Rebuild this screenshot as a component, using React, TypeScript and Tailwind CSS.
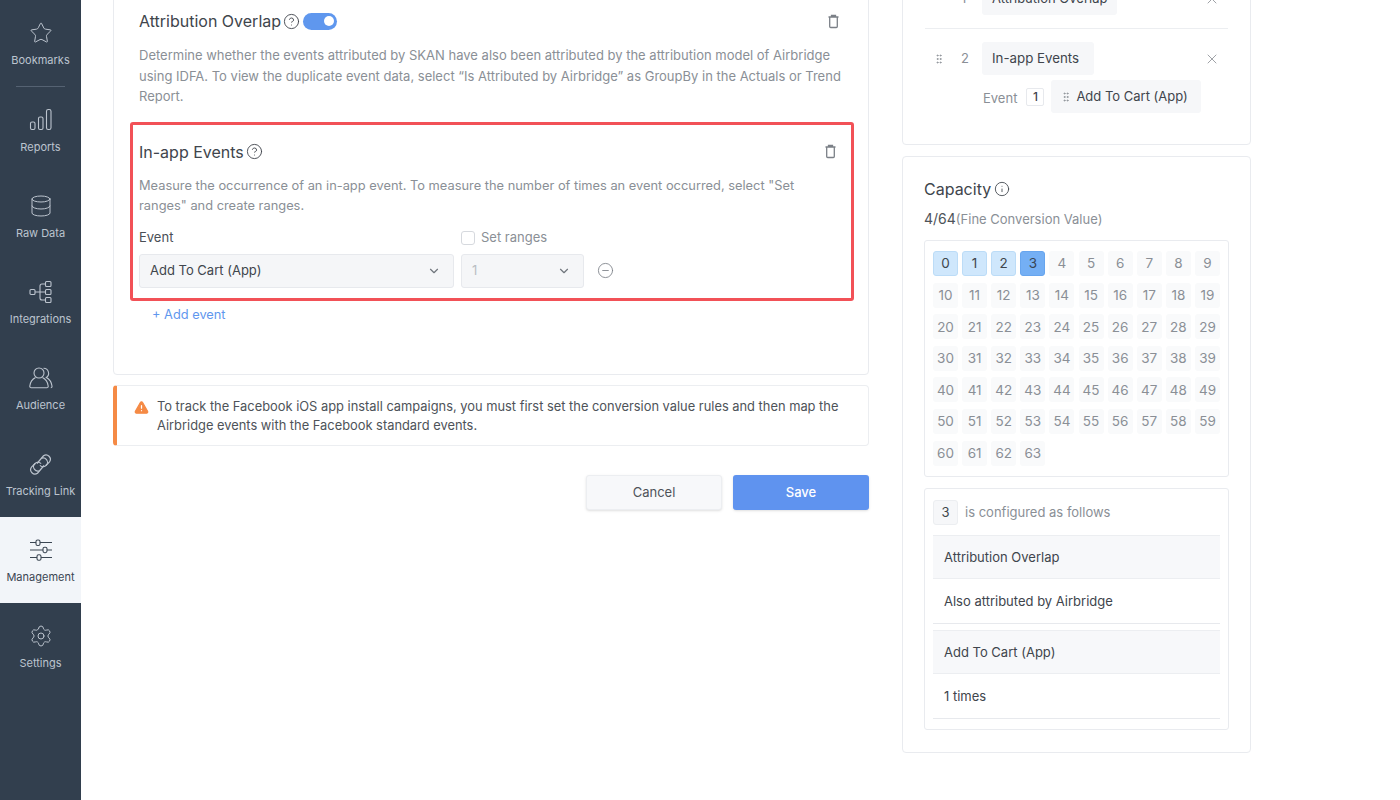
import React from "react";
import { Star, Database, Settings, CircleHelp, Info, ChevronDown, CircleMinus, X, GripVertical, TriangleAlert } from "lucide-react";

const font = { fontFamily: "Inter, 'Liberation Sans', sans-serif" };

function BarsIcon() {
  return (
    <svg width="24" height="24" viewBox="0 0 24 24" fill="none" stroke="currentColor" strokeWidth="1.1">
      <rect x="1.5" y="14" width="4.5" height="7.5" rx="1.5" />
      <rect x="9.5" y="9" width="4.5" height="12.5" rx="1.5" />
      <rect x="17.5" y="1.5" width="4.5" height="20" rx="1.8" />
    </svg>
  );
}

function TreeIcon() {
  return (
    <svg width="24" height="24" viewBox="0 0 24 24" fill="none" stroke="currentColor" strokeWidth="1.1">
      <rect x="1" y="9.5" width="5" height="5" rx="1" />
      <rect x="16.5" y="1.5" width="5.5" height="5" rx="1" />
      <rect x="16.5" y="9.5" width="5.5" height="5" rx="1" />
      <rect x="16.5" y="17.5" width="5.5" height="5" rx="1" />
      <path d="M6 12h10.5M11 12V6c0-1.5.8-2 2-2h3.5M11 12v6c0 1.5.8 2 2 2h3.5" />
    </svg>
  );
}

function PeopleIcon() {
  return (
    <svg width="24" height="22" viewBox="0 0 24 22" fill="none" stroke="currentColor" strokeWidth="1.1">
      <circle cx="10" cy="6" r="5" />
      <path d="M6.5 10.5C3.5 12 1.3 15 .8 19c-.1 1 .4 1.8 1.4 1.8h15.6c1 0 1.5-.8 1.4-1.8-.5-4-2.7-7-5.7-8.5" />
      <path d="M14.5 1.3a5 5 0 0 1 2.8 9.2c2.9 1.5 5.2 4.5 5.7 8.5.1 1-.3 1.8-1.2 1.8" />
    </svg>
  );
}

function ChainIcon() {
  return (
    <svg width="25" height="25" viewBox="0 0 25 25" fill="none" stroke="currentColor" strokeWidth="1.2">
      <path d="M9 11.5 15.5 3.8a4.3 4.3 0 0 1 6 6l-3.6 3.7a4.3 4.3 0 0 1-6-.2" />
      <path d="M16 13.5 9.5 21.2a4.3 4.3 0 0 1-6-6l3.6-3.7a4.3 4.3 0 0 1 6 .2" />
      <path d="M13.5 6.3a4.3 4.3 0 0 1 5 1.3 4.2 4.2 0 0 1-.6 5.9" />
      <path d="M11.5 18.7a4.3 4.3 0 0 1-5-1.3 4.2 4.2 0 0 1 .6-5.9" />
    </svg>
  );
}

function SlidersIcon() {
  return (
    <svg width="24" height="24" viewBox="0 0 24 24" fill="none" stroke="currentColor" strokeWidth="1.1">
      <path d="M1 4.5h6M11 4.5h12M1 12h13M18 12h5M1 19.5h7M12 19.5h11" />
      <rect x="7" y="2" width="4" height="5.5" rx="1.6" />
      <rect x="14" y="9.2" width="4" height="5.5" rx="1.6" />
      <rect x="8" y="16.8" width="4" height="5.5" rx="1.6" />
    </svg>
  );
}

function TrashIcon() {
  return (
    <svg width="15" height="15" viewBox="0 0 15 15" fill="none" stroke="#7b8087" strokeWidth="1.3" className="shrink-0">
      <path d="M2.5 3h10M5.500 3V1.500h4V3" />
      <path d="M3.700 3v9.500c0 .6.400 1 1 1h5.600c.6 0 1-.4 1-1V3" />
    </svg>
  );
}

function NavItem({ icon, label, active, first }: { icon: React.ReactNode; label: string; active?: boolean; first?: boolean }) {
  return (
    <div className={`flex h-[86px] flex-col items-center justify-start pt-[20px] ${active ? "bg-[#f2f5f9] text-[#3b4653]" : "text-[#bcc4ce]"}`}>
      <div className="flex h-[26px] items-center justify-center">{icon}</div>
      <span className={`${first ? "mt-[6px]" : "mt-[5.5px]"} text-[11px] leading-[16px] whitespace-nowrap`}>{label}</span>
    </div>
  );
}

function Sidebar() {
  return (
    <div className="flex h-[800px] w-[81px] shrink-0 flex-col bg-[#323f4e]">
      <NavItem icon={<Star size={24} strokeWidth={1} />} label="Bookmarks" first />
      <div className="mx-[16px] h-px bg-[#556272]" />
      <NavItem icon={<BarsIcon />} label="Reports" />
      <NavItem icon={<Database size={24} strokeWidth={1} />} label="Raw Data" />
      <NavItem icon={<TreeIcon />} label="Integrations" />
      <NavItem icon={<PeopleIcon />} label="Audience" />
      <NavItem icon={<ChainIcon />} label="Tracking Link" />
      <NavItem icon={<SlidersIcon />} label="Management" active />
      <NavItem icon={<Settings size={24} strokeWidth={1} />} label="Settings" />
    </div>
  );
}

function SectionTitle({ title }: { title: string }) {
  return (
    <div className="flex items-center gap-[2px] text-[16px] leading-[24px] text-[#40454c]">
      <span>{title}</span>
      <CircleHelp size={17} strokeWidth={1.3} />
    </div>
  );
}

function MainColumn() {
  return (
    <div className="ml-[32px] flex w-[756px] shrink-0 flex-col">
      <div className="-mt-[40px] h-[415px] rounded-b-[4px] border border-[#e9ebef] pt-[48px]">
        <div className="flex items-center pr-[27px] pl-[25px]">
          <SectionTitle title="Attribution Overlap" />
          <div className="ml-[3px] flex h-[17px] w-[34px] items-center justify-end rounded-full bg-[#5f97ee] pr-[3px]">
            <div className="h-[10px] w-[10px] rounded-full bg-white" />
          </div>
          <span className="ml-auto"><TrashIcon /></span>
        </div>
        <p className="mt-[12px] mr-[20px] ml-[25px] text-[13px] leading-[20.5px] text-[#8a8f96]">
          Determine whether the events attributed by SKAN have also been attributed by the attribution model of Airbridge using IDFA. To view the duplicate event data, select “Is Attributed by Airbridge” as GroupBy in the Actuals or Trend Report.
        </p>
        <div className="mt-[15px] mr-[14px] ml-[16px] h-[179px] rounded-[3px] border-[3px] border-[#f25157] pt-[15px] pr-[13px] pl-[6px]">
          <div className="flex items-center">
            <SectionTitle title="In-app Events" />
            <span className="ml-auto"><TrashIcon /></span>
          </div>
          <p className="mt-[12px] text-[12.85px] leading-[20.5px] text-[#8a8f96]">
            Measure the occurrence of an in-app event. To measure the number of times an event occurred, select "Set ranges" and create ranges.
          </p>
          <div className="mt-[11px] flex h-[20px] items-center text-[13px]">
            <span className="w-[322px] text-[#4a4f56]">Event</span>
            <span className="h-[14px] w-[14px] rounded-[3px] border border-[#d6d9de] bg-white" />
            <span className="ml-[6px] text-[#8a8f96]">Set ranges</span>
          </div>
          <div className="mt-[6px] flex items-center">
            <div className="flex h-[34px] w-[315px] items-center justify-between rounded-[3px] border border-[#e7e9ed] bg-[#f5f6f8] pr-[12px] pl-[10px] text-[13px] text-[#40454c]">
              <span>Add To Cart (App)</span>
              <ChevronDown size={14} className="text-[#70767d]" />
            </div>
            <div className="ml-[7px] flex h-[34px] w-[123px] items-center justify-between rounded-[3px] border border-[#e7e9ed] bg-[#f5f6f8] pr-[12px] pl-[10px] text-[13px] text-[#b9bdc3]">
              <span>1</span>
              <ChevronDown size={14} className="text-[#70767d]" />
            </div>
            <CircleMinus size={17} strokeWidth={1.2} className="ml-[13px] text-[#7b8087]" />
          </div>
        </div>
        <div className="mt-[4px] ml-[38px] text-[12.8px] leading-[20px] text-[#5f97ee]">+ Add event</div>
      </div>
      <div className="mt-[10px] flex h-[61px] rounded-[4px] border border-[#eceef1] border-l-[4px] border-l-[#f58a45] pt-[11px] pl-[17px]">
        <TriangleAlert size={15} fill="#f58a45" stroke="#f58a45" className="mt-[3px] shrink-0 [&>path:nth-child(n+2)]:stroke-white" />
        <p className="ml-[8px] text-[12.87px] leading-[19px] text-[#4e5359]">
          To track the Facebook iOS app install campaigns, you must first set the conversion value rules and then map the Airbridge events with the Facebook standard events.
        </p>
      </div>
      <div className="mt-[29px] flex justify-end gap-[11px] text-[13px]">
        <div className="flex h-[35px] w-[136px] items-center justify-center rounded-[3px] border border-[#eceef1] bg-[#f7f8fa] text-[#4e5359] shadow-sm">Cancel</div>
        <div className="flex h-[35px] w-[136px] items-center justify-center rounded-[3px] bg-[#5f93ef] font-medium text-white shadow-sm">Save</div>
      </div>
    </div>
  );
}

function Chip({ children, className }: { children: React.ReactNode; className?: string }) {
  return <div className={`flex h-[33px] items-center rounded-[3px] bg-[#f6f7f9] text-[#40454c] ${className ?? ""}`}>{children}</div>;
}

function OrderCard() {
  return (
    <div className="-mt-[40px] h-[185px] shrink-0 rounded-b-[4px] border border-[#e9ebef] pt-[21px]">
      <div className="mx-[22px] flex items-center border-b border-[#eceef1] pb-[13px]">
        <span className="ml-[36px] w-[21px] text-[13px] text-[#8a8f96]">1</span>
        <Chip className="px-[10px] text-[13px]">Attribution Overlap</Chip>
        <X size={16} strokeWidth={1.1} className="mr-[8px] ml-auto text-[#7b8087]" />
      </div>
      <div className="mx-[22px] mt-[13px] flex items-center">
        <GripVertical size={12} className="ml-[8px] text-[#8f949a]" />
        <span className="ml-[16px] w-[21px] text-[13px] text-[#8a8f96]">2</span>
        <Chip className="w-[112px] pt-[1px] pl-[10px] text-[13.3px]">In-app Events</Chip>
        <X size={16} strokeWidth={1.1} className="mr-[8px] ml-auto text-[#7b8087]" />
      </div>
      <div className="mt-[5px] ml-[80px] flex items-center">
        <span className="mt-[4px] text-[13px] text-[#8a8f96]">Event</span>
        <span className="ml-[9px] flex h-[18px] w-[18px] items-center justify-center rounded-[2px] border border-[#e7e9ed] text-[12px] font-medium text-[#40454c]">1</span>
        <Chip className="ml-[7px] pt-[1px] pr-[13px] pl-[9px] text-[13px]">
          <GripVertical size={12} className="mr-[4px] text-[#8f949a]" />
          Add To Cart (App)
        </Chip>
      </div>
    </div>
  );
}

function CapacityGrid() {
  const cells = Array.from({ length: 64 }, (_, i) => i);
  return (
    <div className="mt-[11px] grid h-[237px] grid-cols-10 content-start gap-x-[4.1px] gap-y-[6.6px] rounded-[3px] border border-[#e9ebef] px-[8px] pt-[10px]">
      {cells.map((n) => {
        let tone = "bg-[#f9fafb] text-[#8a8f96]";
        if (n < 3) tone = "border border-[#bcdcf7] bg-[#cfe7fc] text-[#40454c]";
        if (n === 3) tone = "border border-[#67a5ee] bg-[#74aff4] text-[#3a4653]";
        return (
          <div key={n} className={`flex h-[25px] w-[25px] items-center justify-center rounded-[3px] text-[13.5px] ${tone}`}>
            {n}
          </div>
        );
      })}
    </div>
  );
}

function ConfigSummary() {
  return (
    <div className="mt-[11px] h-[242px] rounded-[3px] border border-[#e9ebef] px-[8px] pt-[11px]">
      <div className="flex items-center">
        <span className="flex h-[25px] w-[25px] items-center justify-center rounded-[3px] border border-[#eceef1] bg-[#f6f7f9] text-[13px] text-[#40454c]">3</span>
        <span className="ml-[7px] text-[13px] text-[#8a8f96]">is configured as follows</span>
      </div>
      <div className="mt-[10px] flex h-[44px] items-center border-y border-[#eceef1] bg-[#f7f8fa] px-[11px] pt-[2px] text-[13px] text-[#40454c]">Attribution Overlap</div>
      <div className="flex h-[45px] items-center border-b border-[#e7e9ed] px-[11px] pt-[2px] text-[13px] text-[#40454c]">Also attributed by Airbridge</div>
      <div className="mt-[6px] flex h-[44px] items-center border-y border-[#eceef1] bg-[#f7f8fa] px-[11px] pt-[2px] text-[13px] text-[#40454c]">Add To Cart (App)</div>
      <div className="flex h-[45px] items-center border-b border-[#e7e9ed] px-[11px] pt-[2px] text-[13px] text-[#40454c]">1 times</div>
    </div>
  );
}

function SideColumn() {
  return (
    <div className="ml-[33px] flex w-[349px] shrink-0 flex-col">
      <OrderCard />
      <div className="mt-[11px] h-[597px] rounded-[4px] border border-[#e9ebef] px-[21px] pt-[20px]">
        <div className="flex items-center gap-[3px] text-[16px] leading-[24px] text-[#40454c]">
          <span>Capacity</span>
          <Info size={16} strokeWidth={1.3} />
        </div>
        <div className="mt-[8px] text-[13px] leading-[20px]">
          <span className="text-[14px] text-[#4e5359]">4/64</span>
          <span className="text-[#8a8f96]">(Fine Conversion Value)</span>
        </div>
        <CapacityGrid />
        <ConfigSummary />
      </div>
    </div>
  );
}

export default function App() {
  return (
    <div style={font} className="flex h-[800px] w-[1400px] overflow-hidden bg-white">
      <Sidebar />
      <MainColumn />
      <SideColumn />
    </div>
  );
}
